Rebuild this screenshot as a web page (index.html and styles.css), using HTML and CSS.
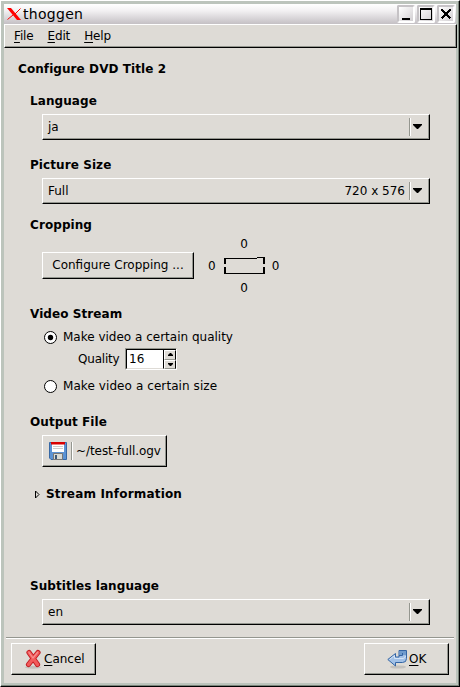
FILE: index.html
```html
<!DOCTYPE html>
<html lang="en">
<head>
<meta charset="utf-8">
<title>thoggen</title>
<link rel="stylesheet" href="styles.css">
</head>
<body>
<div class="window">
  <header class="titlebar">
    <svg class="logo" width="14" height="12" viewBox="0 0 14 12"><path d="M0 0h4l10 12h-4z" fill="#f00"/><path d="M13.500 0.500L8 6M6 7L.5 11.500" stroke="#f00" fill="none"/></svg>
    <span class="title">thoggen</span>
    <div class="controls">
      <span class="control"><svg width="14" height="14"><path d="M3 11h8v2H3z"/></svg></span>
      <span class="control"><svg width="14" height="14"><path d="M1 1h12v12H1zM2 3v9h10V3z" fill-rule="evenodd"/></svg></span>
      <span class="control"><svg width="14" height="14" shape-rendering="crispEdges"><path d="M2.500 2.500l9 9M11.500 2.500l-9 9" stroke="#000" stroke-width="2.800"/></svg></span>
    </div>
  </header>
  <nav class="menubar"><span><u>F</u>ile</span><span><u>E</u>dit</span><span><u>H</u>elp</span></nav>
  <main class="content">
    <h1>Configure DVD Title 2</h1>
    <section class="language">
      <h2>Language</h2>
      <div class="raised combo"><span>ja</span><i class="divider"></i><svg class="arrow" width="9" height="5"><path d="M0 0h9v1L5 5H4L0 1z"/></svg></div>
    </section>
    <section class="size">
      <h2>Picture Size</h2>
      <div class="raised combo"><span>Full</span><span class="dims">720 x 576</span><i class="divider"></i><svg class="arrow" width="9" height="5"><path d="M0 0h9v1L5 5H4L0 1z"/></svg></div>
    </section>
    <section class="cropping">
      <h2>Cropping</h2>
      <div class="crop-row">
        <div class="raised crop-button">Configure Cropping ...</div>
        <div class="crop-values">
          <span class="top">0</span>
          <span class="left">0</span>
          <svg class="frame" width="41" height="17"><path d="M0 1h33V0h8v7h-2V1h-6v1H2v5H0zM0 10h2v6h37v-6h2v7H0z"/></svg>
          <span class="right">0</span>
          <span class="bottom">0</span>
        </div>
      </div>
    </section>
    <section class="video">
      <h2>Video Stream</h2>
      <div class="option"><svg width="13" height="13"><circle cx="6.500" cy="6.500" r="6" fill="#fff" stroke="#000"/><circle cx="6.500" cy="6.500" r="2.700"/></svg><span>Make video a certain quality</span></div>
      <div class="quality"><span class="quality-label">Quality</span>
        <div class="spin"><span class="entry">16</span><span class="steps"><i><svg width="5" height="3"><path d="M2 0h1l2 2v1H0V2z"/></svg></i><i><svg width="5" height="3"><path d="M0 0h5v1L3 3H2L0 1z"/></svg></i></span></div>
      </div>
      <div class="option"><svg width="13" height="13"><circle cx="6.500" cy="6.500" r="6" fill="#fff" stroke="#000"/></svg><span class="wide">Make video a certain size</span></div>
    </section>
    <section class="output">
      <h2>Output File</h2>
      <div class="raised file-button">
        <svg width="20" height="20" viewBox="0 0 20 20"><path d="M1.500 1.500h17v17H3l-1.500-1.500z" fill="#5c93d4" stroke="#3768a5"/><path d="M4 2h12v9H4z" fill="#fff"/><path d="M3 1h14v2.500H3z" fill="#d90000"/><path d="M5 5.500h10M5 7.500h10" stroke="#ccc"/><path d="M5.500 12.500h9v6h-9z" fill="#d8dad5" stroke="#777"/><path d="M7 14h2v4H7z" fill="#3c5879"/></svg>
        <i class="divider"></i><span class="file-name">~/test-full.ogv</span>
      </div>
    </section>
    <section class="stream">
      <svg width="5" height="9"><path d="M.5 1v7L4 4.500z" fill="none" stroke="#000"/></svg>
      <h2>Stream Information</h2>
    </section>
    <section class="subtitles">
      <h2>Subtitles language</h2>
      <div class="raised combo"><span>en</span><i class="divider"></i><svg class="arrow" width="9" height="5"><path d="M0 0h9v1L5 5H4L0 1z"/></svg></div>
    </section>
  </main>
  <footer class="actions">
    <div class="raised action">
      <svg width="20" height="20" viewBox="0 0 20 20"><ellipse cx="9" cy="18.300" rx="8" ry="1.500" fill="#c3c0bb"/><g fill="none" stroke-linecap="round"><path d="M5 3.500l8.500 12M14 3.500L4.500 15.500" stroke="#c01c22" stroke-width="5.200"/><path d="M5 3.500l8.500 12M14 3.500L4.500 15.500" stroke="#f25a5a" stroke-width="3.400"/><path d="M5 3.500l4 5.500 4.500-5.500" stroke="#f79090" stroke-width="1.200"/></g></svg>
      <span><u>C</u>ancel</span>
    </div>
    <div class="raised action ok">
      <svg width="20" height="20" viewBox="0 0 20 20"><ellipse cx="11" cy="18" rx="8" ry="1.600" fill="#c3c1bd"/><path d="M.8 10.500L8.500 4.500v3.500h3.500V6V1.500h7.500v8q0 4-4 4h-7v3.500z" fill="#a2c1e7" stroke="#3465a4" stroke-linejoin="round"/><path d="M13 2h6v4h-6z" fill="#6f9bcd"/><path d="M12 6.500h3.500V4" fill="none" stroke="#3465a4"/><path d="M2.500 10.500l5-4v3H16q2 0 2.500-2.500" fill="none" stroke="#d5e4f6"/></svg>
      <span><u>O</u>K</span>
    </div>
  </footer>
</div>
</body>
</html>
```

FILE: styles.css
```css
* { box-sizing: border-box; }
body { margin: 0; font: 12px/16px "DejaVu Sans", sans-serif; color: #000; }
svg { display: block; flex: none; }
h1, h2 { margin: 0; font-size: 12px; line-height: 16px; font-weight: bold; letter-spacing: 0.08px; }
u { text-decoration: underline; text-underline-offset: 2px; text-decoration-thickness: 1px; text-decoration-skip-ink: none; }

.window {
  width: 460px; height: 687px;
  display: flex; flex-direction: column;
  background: #dedbd6;
  border: 1px solid #000; border-top-color: #fff; border-left-color: #fff;
  box-shadow: inset -1px -1px #7b857b, inset 3px 3px #bcc4bc, inset -3px -3px #bcc4bc;
  padding: 3px;
}
.titlebar {
  height: 20px; flex: none; display: flex; align-items: center;
  padding: 0 1px 0 3px;
  background: linear-gradient(#fff, #f2f0f2 35%, #c4c0c4);
}
.title { font-size: 14px; letter-spacing: 0.3px; margin-left: 2px; flex: 1; padding-bottom: 1px; }
.controls { display: flex; gap: 2px; }
.control {
  width: 18px; height: 18px; border: 2px solid #fff; border-top-color: #c6c3c6; border-left-color: #c6c3c6;
  border-radius: 2px; background: linear-gradient(135deg, #fff, #d2cfd2);
}
.menubar {
  height: 24px; flex: none; display: flex; align-items: center; gap: 14px;
  padding: 0 9px; margin-right: -1px; letter-spacing: -0.15px;
  border: 1px solid #000; border-top-color: #fff; border-left-color: #fff;
  box-shadow: inset -1px -1px #94968f;
}
.content { flex: 1; padding: 13px 26px 0 14px; }
section { margin-left: 12px; }
.raised {
  display: flex; align-items: center;
  border: 1px solid #000; border-top-color: #fff; border-left-color: #fff;
  box-shadow: inset -1px -1px #94968f;
}
.divider { flex: none; width: 2px; height: 18px; border-left: 1px solid #94968f; border-right: 1px solid #fff; }
.combo { height: 26px; margin: 5px 0 0 12px; padding: 0 7px 0 5px; }
.combo .divider { margin-left: auto; }
.arrow { margin: 0 0 1px 2px; }
.dims { margin-left: auto; margin-right: 4px; }
.combo .dims + .divider { margin-left: 0; }
.language { margin-top: 16px; }
.size { margin-top: 17px; }
.cropping { margin-top: 13px; }
.crop-row { display: flex; align-items: flex-start; height: 62px; margin: 2px 0 0 12px; }
.crop-button { width: 152px; height: 27px; margin-top: 17px; padding-bottom: 1px; justify-content: center; }
.crop-values {
  display: grid; margin-left: 10px;
  grid-template: "t t t" 18px "l f r" 26px "b b b" 18px / 20px 41px 19px;
  align-items: center; justify-items: center;
}
.top { grid-area: t; }
.left { grid-area: l; justify-self: start; padding-left: 4px; }
.frame { grid-area: f; align-self: start; margin-top: 4px; }
.right { grid-area: r; padding-left: 2px; }
.bottom { grid-area: b; }
.video { margin-top: 9px; }
.option { display: flex; align-items: center; gap: 6px; height: 16px; margin: 7px 0 0 14px; }
.wide { letter-spacing: 0.08px; }
.quality { display: flex; align-items: center; height: 22px; margin: 3px 0 0 48px; }
.quality-label { width: 47px; letter-spacing: -0.2px; }
.quality + .option { margin-top: 8px; }
.spin { display: flex; width: 52px; height: 22px; border: 1px solid #94968f; border-right-color: #fff; border-bottom-color: #fff; }
.entry { flex: 1; background: #fff; border: 1px solid #000; border-bottom-color: #dedbd6; padding-left: 2px; line-height: 18px; }
.steps { width: 12px; display: flex; flex-direction: column; border-top: 1px solid #000; }
.steps i { flex: 1; display: flex; align-items: center; justify-content: center; border: 1px solid #94968f; border-right-color: #000; border-left-color: #fff; border-top-color: #fff; }
.output { margin-top: 20px; }
.file-button { width: 125px; height: 32px; margin: 5px 0 0 12px; padding-left: 5px; }
.file-button .divider { margin: 0 3px; }
.file-name { letter-spacing: -0.07px; }
.stream { display: flex; align-items: center; gap: 6px; margin: 19px 0 0 17px; }
.stream h2 { letter-spacing: 0.18px; }
.subtitles { margin-top: 76px; }
.actions {
  height: 46px; flex: none; display: flex; justify-content: space-between; align-items: flex-start;
  margin: 0 2px; padding: 5px 5px 0; border-top: 1px solid #94968f; box-shadow: inset 0 1px #fff;
}
.action { width: 85px; height: 32px; padding-left: 12px; }
.ok { padding-left: 22px; gap: 2px; }
```
